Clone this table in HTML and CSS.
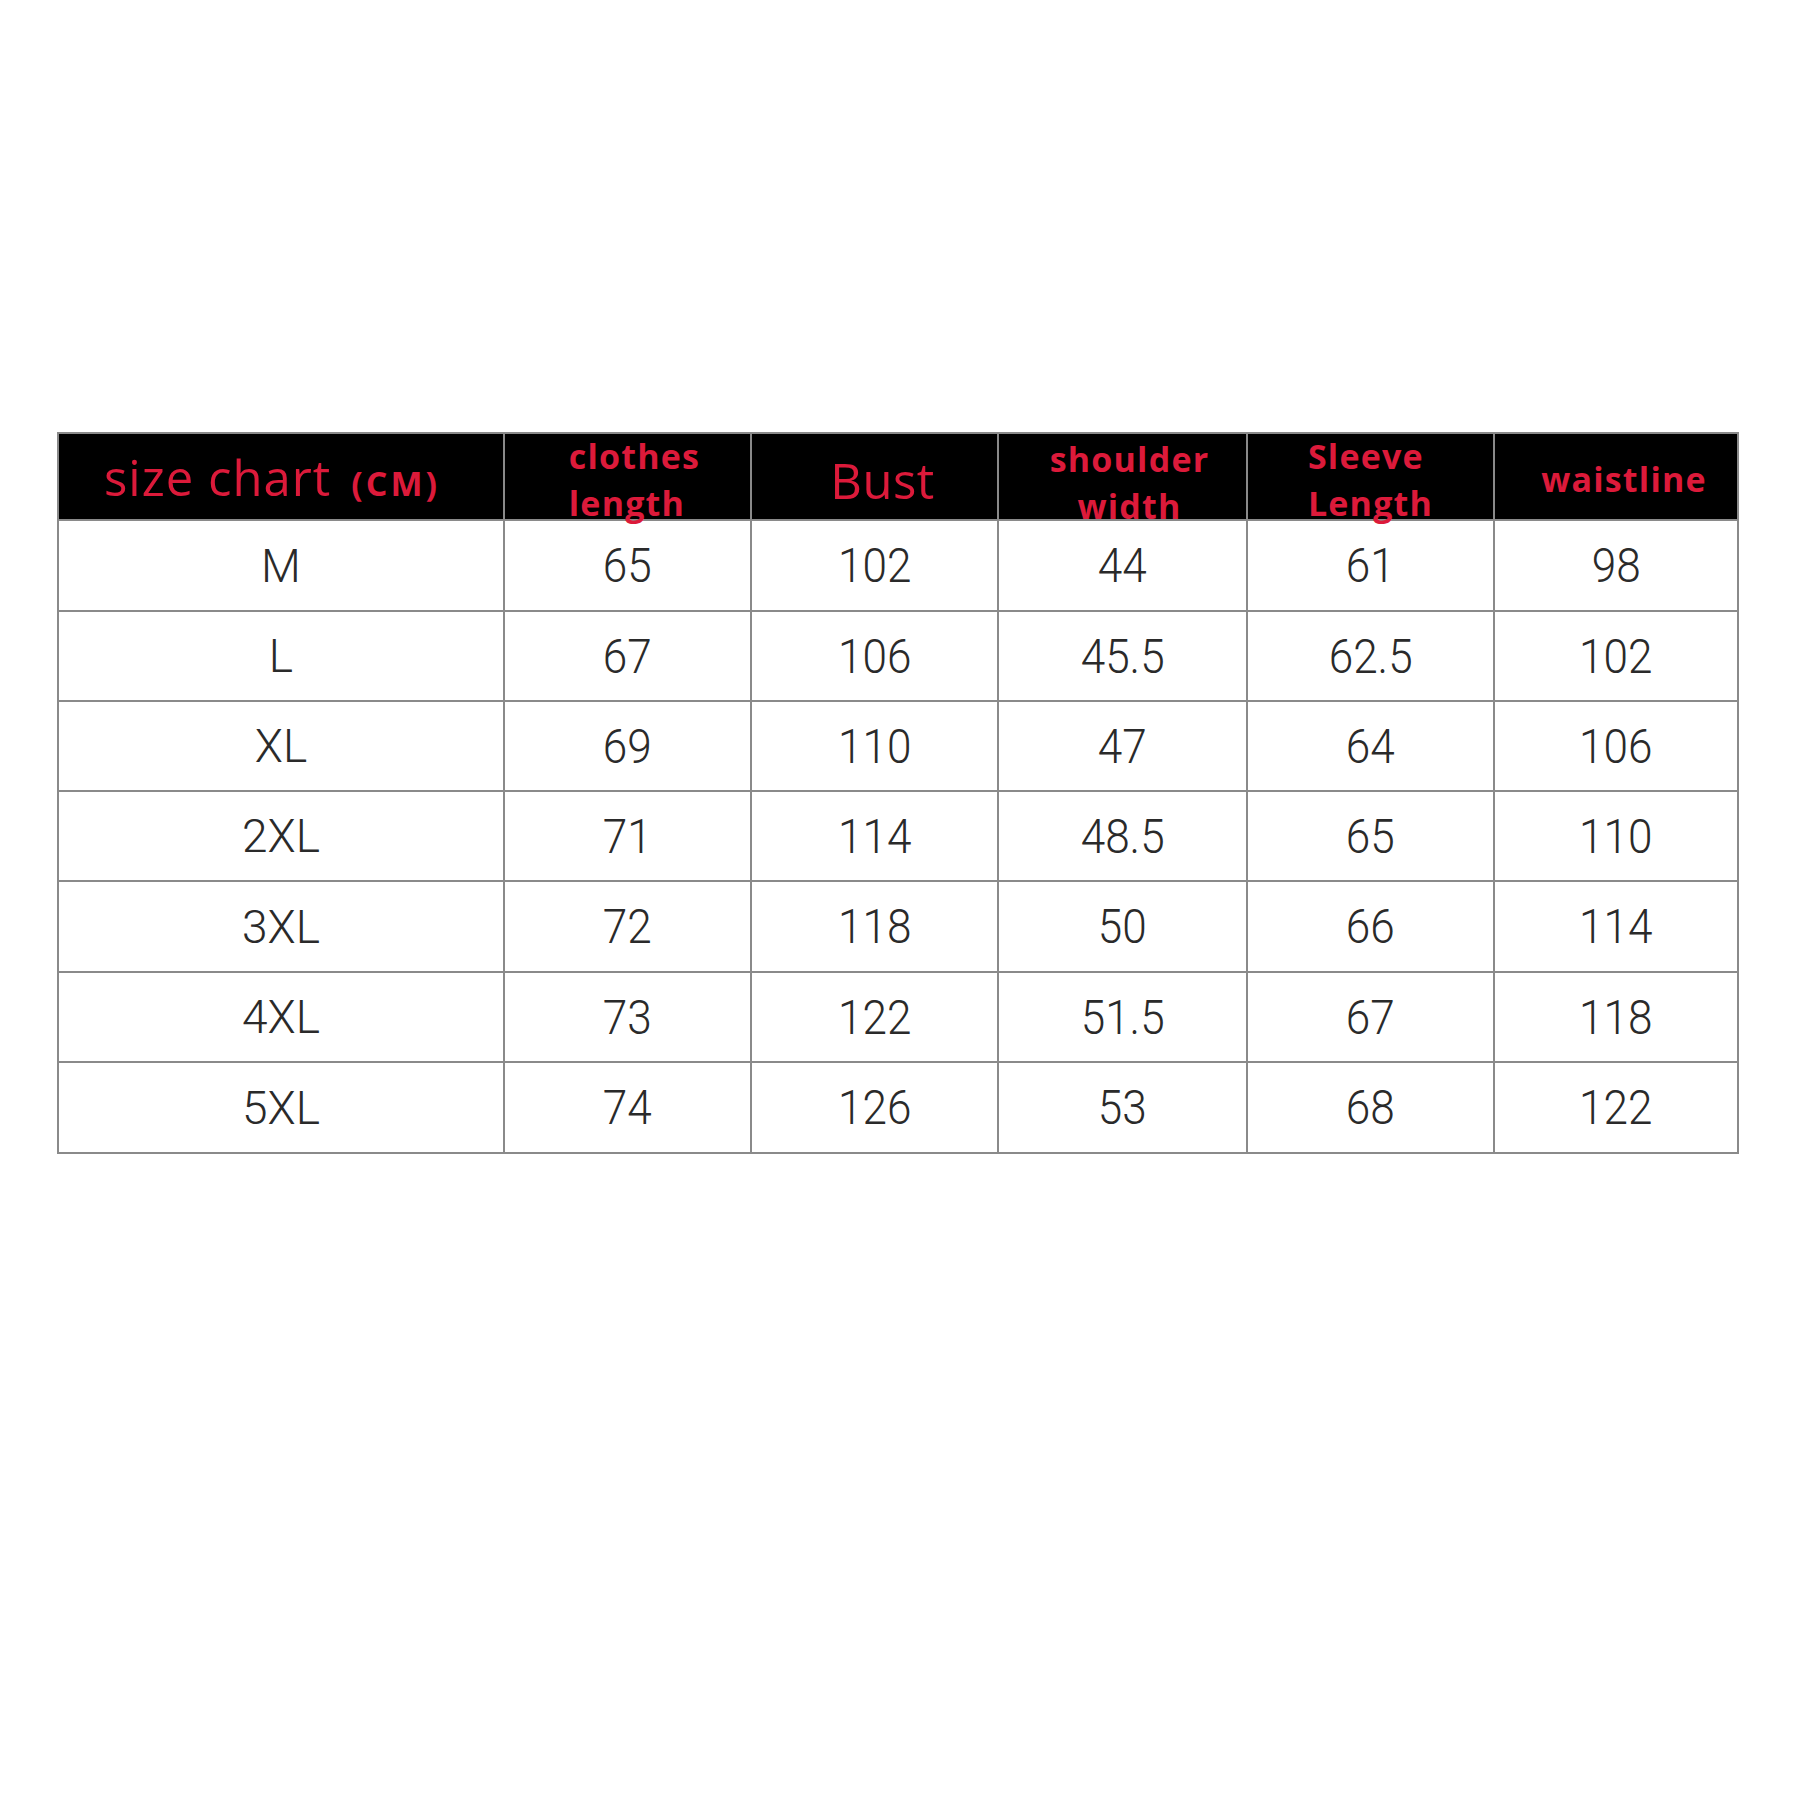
FILE: index.html
```html
<!DOCTYPE html>
<html lang="en">
<head>
<meta charset="utf-8">
<title>Size chart</title>
<link rel="stylesheet" href="styles.css">
</head>
<body>
<main class="page">
  <div class="chart">
    <div class="hcell first"><span class="h-title">size chart<span class="h-unit">(CM)</span></span></div>
    <div class="hcell two"><span class="h-bold left">clothes<br>length</span></div>
    <div class="hcell bust"><span class="h-big">Bust</span></div>
    <div class="hcell two low"><span class="h-bold">shoulder<br>width</span></div>
    <div class="hcell two sleeve"><span class="h-bold left">Sleeve<br>Length</span></div>
    <div class="hcell one"><span class="h-bold">waistline</span></div>

    <div class="cell size">M</div><div class="cell"><span class="num">65</span></div><div class="cell"><span class="num">102</span></div><div class="cell"><span class="num">44</span></div><div class="cell"><span class="num">61</span></div><div class="cell"><span class="num">98</span></div>
    <div class="cell size">L</div><div class="cell"><span class="num">67</span></div><div class="cell"><span class="num">106</span></div><div class="cell"><span class="num">45.5</span></div><div class="cell"><span class="num">62.5</span></div><div class="cell"><span class="num">102</span></div>
    <div class="cell size">XL</div><div class="cell"><span class="num">69</span></div><div class="cell"><span class="num">110</span></div><div class="cell"><span class="num">47</span></div><div class="cell"><span class="num">64</span></div><div class="cell"><span class="num">106</span></div>
    <div class="cell size">2XL</div><div class="cell"><span class="num">71</span></div><div class="cell"><span class="num">114</span></div><div class="cell"><span class="num">48.5</span></div><div class="cell"><span class="num">65</span></div><div class="cell"><span class="num">110</span></div>
    <div class="cell size">3XL</div><div class="cell"><span class="num">72</span></div><div class="cell"><span class="num">118</span></div><div class="cell"><span class="num">50</span></div><div class="cell"><span class="num">66</span></div><div class="cell"><span class="num">114</span></div>
    <div class="cell size">4XL</div><div class="cell"><span class="num">73</span></div><div class="cell"><span class="num">122</span></div><div class="cell"><span class="num">51.5</span></div><div class="cell"><span class="num">67</span></div><div class="cell"><span class="num">118</span></div>
    <div class="cell size">5XL</div><div class="cell"><span class="num">74</span></div><div class="cell"><span class="num">126</span></div><div class="cell"><span class="num">53</span></div><div class="cell"><span class="num">68</span></div><div class="cell"><span class="num">122</span></div>
  </div>
</main>
</body>
</html>
```

FILE: styles.css
```css
html, body {
  margin: 0;
  padding: 0;
  background: #ffffff;
}

.page {
  width: 1800px;
  height: 1800px;
  box-sizing: border-box;
  padding-top: 432px;
  padding-left: 57px;
}

.chart {
  display: grid;
  width: 1682px;
  box-sizing: border-box;
  grid-template-columns: 444px 245px 245px 247px 245px 242px;
  grid-template-rows: 85px 89px 88px 88px 88px 89px 88px 89px;
  gap: 2px;
  border: 2px solid #8a8a8a;
  background: #8a8a8a;
}

.hcell {
  background: #000000;
  color: #dc1a3a;
  display: flex;
  align-items: center;
  justify-content: center;
  position: relative;
  z-index: 1;
  font-family: "Open Sans", "Liberation Sans", sans-serif;
  box-sizing: border-box;
}

.hcell.first {
  padding-right: 18px;
  padding-top: 2px;
}

.hcell.two {
  padding-top: 6px;
  padding-left: 14px;
}

.hcell.two.low {
  padding-top: 12px;
}

.hcell.two.sleeve {
  padding-left: 0;
}

.hcell.one {
  padding-top: 6px;
  padding-left: 16px;
}

.hcell.bust {
  padding-top: 8px;
  padding-left: 16px;
}

.h-title {
  font-size: 49px;
  font-weight: 400;
  letter-spacing: 1px;
  line-height: 1;
  white-space: nowrap;
}

.h-unit {
  font-size: 34px;
  font-weight: 700;
  letter-spacing: 3px;
  margin-left: 20px;
}

.h-big {
  font-size: 49px;
  font-weight: 400;
  letter-spacing: 0.5px;
  line-height: 1;
}

.h-bold {
  font-size: 34px;
  font-weight: 700;
  line-height: 47px;
  letter-spacing: 1.2px;
  text-align: center;
}

.h-bold.left {
  text-align: left;
}

.cell {
  background: #ffffff;
  color: #2a2a2a;
  display: flex;
  align-items: center;
  justify-content: center;
  font-family: Roboto, "Liberation Sans", sans-serif;
  font-weight: 300;
  font-size: 49px;
}

.cell.size {
  font-size: 46px;
}

.num {
  display: inline-block;
  transform: scaleX(0.9);
}
```
